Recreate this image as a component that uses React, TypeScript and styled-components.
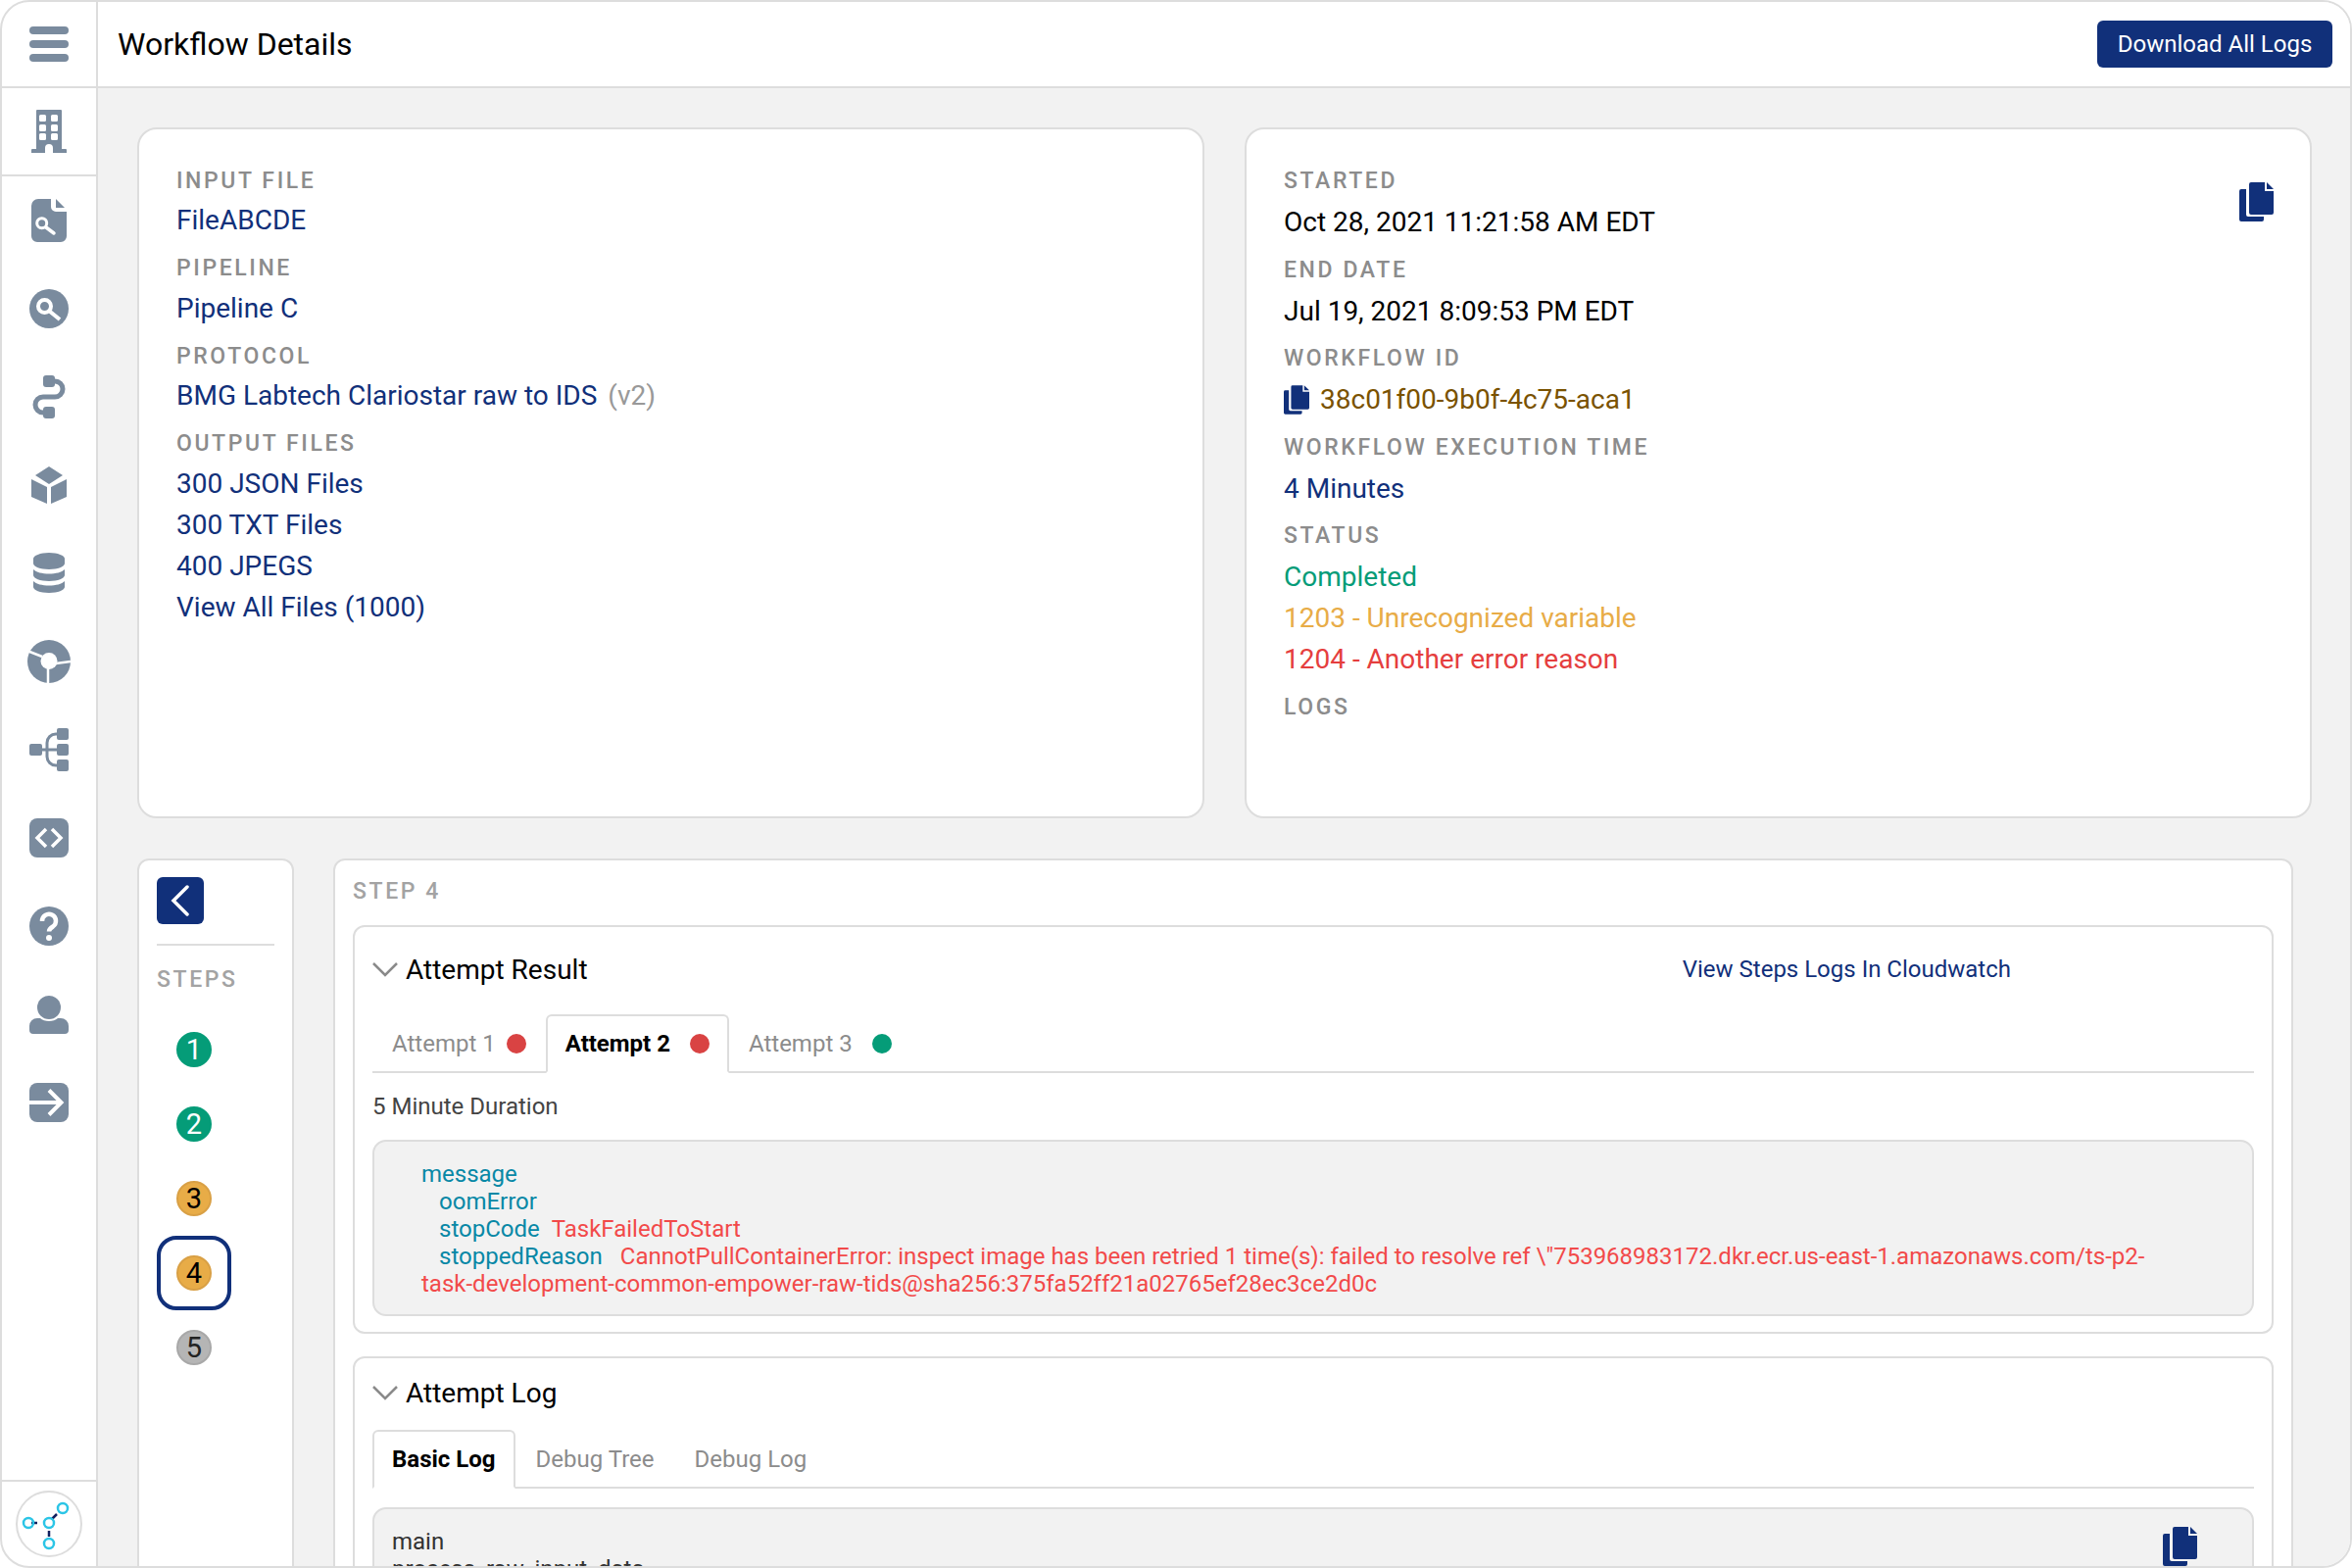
import React from 'react';
import styled, { createGlobalStyle } from 'styled-components';

const NAVY = '#11307a';
const LINE = '#dddddd';
const ICON = '#7a8b9e';
const GREEN = '#059c78';
const AMBER = '#e8ac47';
const RED = '#e53e3e';

const GlobalStyle = createGlobalStyle`
  html, body {
    margin: 0;
    padding: 0;
    background: #fff;
    font-family: Roboto, "Liberation Sans", sans-serif;
  }
`;

const Frame = styled.div`
  box-sizing: border-box;
  width: 2400px;
  height: 1600px;
  border: 2px solid ${LINE};
  border-radius: 30px;
  overflow: hidden;
  display: flex;
  background: #fff;
`;

const Sidebar = styled.nav`
  box-sizing: border-box;
  flex: 0 0 98px;
  display: flex;
  flex-direction: column;
  border-right: 2px solid ${LINE};
`;

const NavCell = styled.div<{ $h?: number; $rule?: boolean }>`
  box-sizing: border-box;
  height: ${p => p.$h ?? 90}px;
  display: flex;
  align-items: center;
  justify-content: center;
  border-bottom: ${p => (p.$rule ? `2px solid ${LINE}` : 'none')};
`;

const LogoCell = styled.div`
  box-sizing: border-box;
  margin-top: auto;
  height: 88px;
  border-top: 2px solid ${LINE};
  display: flex;
  align-items: center;
  justify-content: center;
`;

const LogoRing = styled.div`
  box-sizing: border-box;
  width: 68px;
  height: 68px;
  border: 2px solid ${LINE};
  border-radius: 50%;
  display: flex;
  align-items: center;
  justify-content: center;
`;

const Main = styled.main`
  flex: 1;
  min-width: 0;
  display: flex;
  flex-direction: column;
  background: #f2f2f2;
`;

const Header = styled.header`
  box-sizing: border-box;
  flex: 0 0 88px;
  display: flex;
  align-items: center;
  justify-content: space-between;
  padding: 0 18px 0 20px;
  background: #fff;
  border-bottom: 2px solid ${LINE};
`;

const Title = styled.h1`
  margin: 0;
  font-size: 32px;
  font-weight: 400;
  color: #000;
`;

const DownloadButton = styled.button`
  width: 240px;
  height: 48px;
  border: 0;
  border-radius: 6px;
  background: ${NAVY};
  color: #fff;
  font: 400 24px Roboto, sans-serif;
`;

const Content = styled.div`
  flex: 1;
  min-height: 0;
  padding: 40px 39px 0 40px;
`;

const TopRow = styled.div`
  display: grid;
  grid-template-columns: 1089px 1089px;
  gap: 41px;
  margin-bottom: 41px;
`;

const Card = styled.section<{ $top: number }>`
  box-sizing: border-box;
  height: 705px;
  padding: ${p => p.$top}px 37px 0 38px;
  background: #fff;
  border: 2px solid ${LINE};
  border-radius: 20px;
  display: flex;
  justify-content: space-between;
  align-items: flex-start;
`;

const Field = styled.div<{ $wide?: boolean }>`
  margin-bottom: ${p => (p.$wide ? 13.5 : 14)}px;
`;

const Label = styled.div<{ $wide?: boolean }>`
  height: 28px;
  margin-bottom: ${p => (p.$wide ? 7 : 5.5)}px;
  font-size: 23px;
  line-height: 28px;
  font-weight: 500;
  letter-spacing: 2.6px;
  color: #8c8c8c;
`;

const Value = styled.div<{ $color?: string }>`
  min-height: 42px;
  display: flex;
  align-items: center;
  gap: 11px;
  font-size: 28px;
  line-height: 42px;
  color: ${p => p.$color ?? '#000'};
`;

const Version = styled.span`
  margin-left: 11px;
  color: #999;
`;

const Sheets = styled.svg<{ $w: number; $h: number }>`
  flex: none;
  width: ${p => p.$w}px;
  height: ${p => p.$h}px;
  fill: ${NAVY};
`;

const CornerCopy = styled.div`
  margin: 15px 0 0 0;
`;

const BottomRow = styled.div`
  display: flex;
  gap: 40px;
`;

const StepsPanel = styled.aside`
  box-sizing: border-box;
  flex: 0 0 160px;
  height: 800px;
  padding: 17px 18px 0;
  background: #fff;
  border: 2px solid ${LINE};
  border-radius: 12px 12px 0 0;
`;

const BackButton = styled.button`
  display: flex;
  align-items: center;
  justify-content: center;
  width: 48px;
  height: 48px;
  padding: 0;
  border: 0;
  border-radius: 6px;
  background: ${NAVY};
`;

const Divider = styled.hr`
  width: 120px;
  margin: 20px 0 21px;
  border: 0;
  border-top: 2px solid ${LINE};
`;

const StepsLabel = styled(Label)`
  margin-bottom: 19px;
  color: #a3a3a3;
`;

const StepSlot = styled.div<{ $active?: boolean }>`
  box-sizing: border-box;
  width: 76px;
  height: 76px;
  display: flex;
  align-items: center;
  justify-content: center;
  border: ${p => (p.$active ? `4px solid ${NAVY}` : '0')};
  border-radius: 20px;
`;

const StepCircle = styled.div<{ $bg: string; $edge: string; $fg: string }>`
  box-sizing: border-box;
  width: 36px;
  height: 36px;
  display: flex;
  align-items: center;
  justify-content: center;
  border: 2px solid ${p => p.$edge};
  border-radius: 50%;
  background: ${p => p.$bg};
  color: ${p => p.$fg};
  font-size: 29px;
`;

const DetailPanel = styled.section`
  box-sizing: border-box;
  flex: 0 0 2000px;
  height: 800px;
  padding: 18px 18px 0;
  background: #fff;
  border: 2px solid ${LINE};
  border-radius: 12px 12px 0 0;
`;

const StepTitle = styled(Label)`
  margin-bottom: 20px;
  color: #a3a3a3;
`;

const SubCard = styled.div`
  box-sizing: border-box;
  margin-bottom: 23px;
  padding: 0 18px 16px;
  border: 2px solid ${LINE};
  border-radius: 12px;
`;

const SubHead = styled.div<{ $top: number }>`
  display: flex;
  align-items: center;
  padding-top: ${p => p.$top}px;
  height: 40px;
`;

const Chevron = styled.svg`
  flex: none;
  width: 26px;
  height: 15px;
  margin-right: 8px;
  fill: none;
  stroke: #8a8a8a;
  stroke-width: 2.5;
`;

const SubTitle = styled.span`
  font-size: 28px;
  color: #000;
`;

const CloudwatchLink = styled.a`
  margin: 0 248px 0 auto;
  font-size: 24px;
  color: ${NAVY};
`;

const TabBar = styled.div<{ $top: number; $gap?: number }>`
  display: flex;
  gap: ${p => p.$gap ?? 0}px;
  height: 58px;
  margin-top: ${p => p.$top}px;
  border-bottom: 2px solid ${LINE};
`;

const Tab = styled.div<{ $active?: boolean; $gap?: number }>`
  box-sizing: border-box;
  height: 60px;
  display: flex;
  align-items: center;
  gap: ${p => p.$gap ?? 20}px;
  padding: 0 18px;
  border: 2px solid ${p => (p.$active ? LINE : 'transparent')};
  border-bottom-color: ${p => (p.$active ? '#fff' : 'transparent')};
  border-radius: 6px 6px 0 0;
  background: ${p => (p.$active ? '#fff' : 'transparent')};
  font-size: 24px;
  font-weight: ${p => (p.$active ? 700 : 400)};
  color: ${p => (p.$active ? '#000' : '#8c8c8c')};
`;

const Dot = styled.span<{ $color: string }>`
  flex: none;
  width: 20px;
  height: 20px;
  border-radius: 50%;
  background: ${p => p.$color};
`;

const Duration = styled.div`
  margin-top: 19px;
  font-size: 24px;
  line-height: 30px;
  color: #444;
`;

const CodeBox = styled.div<{ $top: number }>`
  position: relative;
  box-sizing: border-box;
  margin-top: ${p => p.$top}px;
  background: #f2f2f2;
  border: 2px solid ${LINE};
  border-radius: 14px;
  font-size: 24px;
  line-height: 28px;
`;

const ResultCode = styled(CodeBox)`
  padding: 19px 20px 17px 48px;
  white-space: nowrap;
`;

const LogCode = styled(CodeBox)`
  height: 300px;
  padding: 19px 18px;
  color: #333;
`;

const CodeLine = styled.div<{ $indent?: boolean }>`
  padding-left: ${p => (p.$indent ? 18 : 0)}px;
`;

const Key = styled.span<{ $gap?: number }>`
  margin-right: ${p => p.$gap ?? 0}px;
  color: #0888a6;
`;

const Err = styled.span`
  color: #f24a4a;
`;

const LogCopy = styled.div`
  position: absolute;
  top: 18px;
  right: 56px;
`;

const CopyIcon = ({ w, h }: { w: number; h: number }) => (
  <Sheets $w={w} $h={h} viewBox="0 0 35 40">
    <path d="M7 7H2a2 2 0 0 0-2 2v29a2 2 0 0 0 2 2h21a2 2 0 0 0 2-2v-3H9a2 2 0 0 1-2-2z" />
    <path d="M10 2a2 2 0 0 1 2-2h14v9h9v22a2 2 0 0 1-2 2H12a2 2 0 0 1-2-2z" />
    <path d="M28 0l7 7h-7z" />
  </Sheets>
);

const navIcons: { name: string; body: React.ReactNode }[] = [
  {
    name: 'file-search',
    body: (
      <>
        <path d="M4 7a7 7 0 0 1 7-7h13v8a5 5 0 0 0 5 5h11v25a6 6 0 0 1-6 6H10a6 6 0 0 1-6-6z" />
        <path d="M29 0l9 9h-9z" />
        <circle cx="14.700" cy="24.700" r="5" fill="none" stroke="#fff" strokeWidth="3" />
        <path d="M19 29l8 6" stroke="#fff" strokeWidth="3.500" strokeLinecap="round" />
      </>
    ),
  },
  {
    name: 'search',
    body: (
      <>
        <circle cx="22" cy="22" r="20" />
        <circle cx="17.500" cy="19.500" r="6.500" fill="none" stroke="#fff" strokeWidth="4" />
        <path d="M22.500 24.500L33 33" stroke="#fff" strokeWidth="4" />
      </>
    ),
  },
  {
    name: 'route',
    body: (
      <>
        <rect x="16" y="0" width="12" height="12" rx="3" />
        <rect x="16" y="32" width="12" height="12" rx="3" />
        <path d="M26 6h2a8 8 0 0 1 0 16H16a8 8 0 0 0 0 16h2" fill="none" stroke={ICON} strokeWidth="5" />
      </>
    ),
  },
  {
    name: 'cube',
    body: (
      <>
        <path d="M22 3l14 9-14 9-14-9z" />
        <path d="M4 16l16 8v17L4 34z" />
        <path d="M40 16l-16 8v17l16-7z" />
      </>
    ),
  },
  {
    name: 'database',
    body: (
      <>
        <path d="M6 7c0-3 7-6 16-6s16 3 16 6v5c0 3-7 6-16 6S6 15 6 12z" />
        <path d="M6 18c3 3 9 4.500 16 4.500s13-1.500 16-4.500v6c0 3-7 6-16 6s-16-3-16-6z" />
        <path d="M6 30c3 3 9 4.500 16 4.500s13-1.500 16-4.500v6c0 3-7 6-16 6s-16-3-16-6z" />
      </>
    ),
  },
  {
    name: 'chart',
    body: (
      <>
        <circle cx="22" cy="22" r="22" />
        <circle cx="22" cy="21.500" r="8.500" fill="#fff" />
        <path d="M1 11.500l14 5.500M29 24l15-2M21 29v15" fill="none" stroke="#fff" strokeWidth="2.500" />
      </>
    ),
  },
  {
    name: 'tree',
    body: (
      <>
        <rect x="2" y="16" width="13" height="12" rx="2" />
        <rect x="30" y="0" width="12" height="12" rx="2" />
        <rect x="30" y="16" width="12" height="12" rx="2" />
        <rect x="30" y="32" width="12" height="12" rx="2" />
        <path d="M14 22h16M30 6h-1a9 9 0 0 0-9 9v14a9 9 0 0 0 9 9h1" fill="none" stroke={ICON} strokeWidth="3" />
      </>
    ),
  },
  {
    name: 'code',
    body: (
      <>
        <rect x="2" y="2" width="40" height="40" rx="8" />
        <path d="M19 13l-9 9 9 9M25 13l9 9-9 9" fill="none" stroke="#fff" strokeWidth="3.500" />
      </>
    ),
  },
  {
    name: 'help',
    body: (
      <>
        <circle cx="22" cy="22" r="20" />
        <path d="M15 17a7 7 0 1 1 11 5.500c-2.500 1.500-4 2.500-4 5" fill="none" stroke="#fff" strokeWidth="4.500" />
        <circle cx="22" cy="34" r="3" fill="#fff" />
      </>
    ),
  },
  {
    name: 'user',
    body: (
      <>
        <circle cx="22" cy="15" r="12" />
        <path d="M2 34a8 8 0 0 1 8-8h3c2 2 5.500 3 9 3s7-1 9-3h3a8 8 0 0 1 8 8v4a4 4 0 0 1-4 4H6a4 4 0 0 1-4-4z" />
      </>
    ),
  },
  {
    name: 'exit',
    body: (
      <>
        <rect x="2" y="2" width="40" height="40" rx="8" />
        <path d="M2 22h32M22 9.500L34.500 22 22 34.500" fill="none" stroke="#fff" strokeWidth="4" />
      </>
    ),
  },
];

const NavSvg = styled.svg`
  width: 44px;
  height: 44px;
  fill: ${ICON};
`;

const Logo = () => (
  <svg width="64" height="64" viewBox="0 0 64 64" fill="none">
    <path d="M14 31h6M35 27l5-5M32 39v6" stroke="#11205e" strokeWidth="2.500" />
    <g stroke="#2cc5e6" strokeWidth="2.500">
      <circle cx="11" cy="31" r="5" />
      <circle cx="32" cy="31" r="5" />
      <circle cx="46" cy="16" r="5" />
      <circle cx="32" cy="52" r="5" />
    </g>
  </svg>
);

const steps = [
  { n: 1, bg: GREEN, edge: GREEN, fg: '#fff' },
  { n: 2, bg: GREEN, edge: GREEN, fg: '#fff' },
  { n: 3, bg: AMBER, edge: '#d9a045', fg: '#000' },
  { n: 4, bg: AMBER, edge: '#d9a045', fg: '#000', active: true },
  { n: 5, bg: '#b5b5b5', edge: '#a8a8a8', fg: '#222' },
];

const App = () => (
  <>
    <GlobalStyle />
    <Frame>
      <Sidebar>
        <NavCell $h={88} $rule>
          <NavSvg viewBox="0 0 44 44">
            <rect x="2" y="4" width="40" height="8" rx="4" />
            <rect x="2" y="18" width="40" height="8" rx="4" />
            <rect x="2" y="32" width="40" height="8" rx="4" />
          </NavSvg>
        </NavCell>
        <NavCell $rule>
          <NavSvg viewBox="0 0 44 44">
            <path d="M10 0h24a1 1 0 0 1 1 1v39h4a1 1 0 0 1 1 1v3H26v-5a4 4 0 0 0-8 0v5H4v-3a1 1 0 0 1 1-1h4V1a1 1 0 0 1 1-1z" />
            <g fill="#fff">
              <rect x="12" y="5" width="7" height="7" rx="1.500" />
              <rect x="24" y="5" width="7" height="7" rx="1.500" />
              <rect x="12" y="15" width="7" height="7" rx="1.500" />
              <rect x="24" y="15" width="7" height="7" rx="1.500" />
              <rect x="12" y="24" width="7" height="7" rx="1.500" />
              <rect x="24" y="24" width="7" height="7" rx="1.500" />
            </g>
          </NavSvg>
        </NavCell>
        {navIcons.map(icon => (
          <NavCell key={icon.name}>
            <NavSvg viewBox="0 0 44 44">{icon.body}</NavSvg>
          </NavCell>
        ))}
        <LogoCell>
          <LogoRing>
            <Logo />
          </LogoRing>
        </LogoCell>
      </Sidebar>

      <Main>
        <Header>
          <Title>Workflow Details</Title>
          <DownloadButton>Download All Logs</DownloadButton>
        </Header>

        <Content>
          <TopRow>
            <Card $top={38.5}>
              <div>
                <Field>
                  <Label>INPUT FILE</Label>
                  <Value $color={NAVY}>FileABCDE</Value>
                </Field>
                <Field>
                  <Label>PIPELINE</Label>
                  <Value $color={NAVY}>Pipeline C</Value>
                </Field>
                <Field>
                  <Label>PROTOCOL</Label>
                  <Value $color={NAVY}>
                    <span>
                      BMG Labtech Clariostar raw to IDS<Version>(v2)</Version>
                    </span>
                  </Value>
                </Field>
                <Field>
                  <Label>OUTPUT FILES</Label>
                  <Value $color={NAVY}>300 JSON Files</Value>
                  <Value $color={NAVY}>300 TXT Files</Value>
                  <Value $color={NAVY}>400 JPEGS</Value>
                  <Value $color={NAVY}>View All Files (1000)</Value>
                </Field>
              </div>
            </Card>

            <Card $top={39}>
              <div>
                <Field $wide>
                  <Label $wide>STARTED</Label>
                  <Value>Oct 28, 2021 11:21:58 AM EDT</Value>
                </Field>
                <Field $wide>
                  <Label $wide>END DATE</Label>
                  <Value>Jul 19, 2021 8:09:53 PM EDT</Value>
                </Field>
                <Field $wide>
                  <Label $wide>WORKFLOW ID</Label>
                  <Value $color="#7a5200">
                    <CopyIcon w={26} h={30} />
                    38c01f00-9b0f-4c75-aca1
                  </Value>
                </Field>
                <Field $wide>
                  <Label $wide>WORKFLOW EXECUTION TIME</Label>
                  <Value $color={NAVY}>4 Minutes</Value>
                </Field>
                <Field $wide>
                  <Label $wide>STATUS</Label>
                  <Value $color={GREEN}>Completed</Value>
                  <Value $color={AMBER}>1203 - Unrecognized variable</Value>
                  <Value $color={RED}>1204 - Another error reason</Value>
                </Field>
                <Field $wide>
                  <Label $wide>LOGS</Label>
                </Field>
              </div>
              <CornerCopy>
                <CopyIcon w={35} h={40} />
              </CornerCopy>
            </Card>
          </TopRow>

          <BottomRow>
            <StepsPanel>
              <BackButton>
                <svg width="20" height="32" viewBox="0 0 20 32" fill="none" stroke="#fff" strokeWidth="3.500" strokeLinecap="round">
                  <path d="M17 2L3 16l14 14" />
                </svg>
              </BackButton>
              <Divider />
              <StepsLabel>STEPS</StepsLabel>
              {steps.map(step => (
                <StepSlot key={step.n} $active={step.active}>
                  <StepCircle $bg={step.bg} $edge={step.edge} $fg={step.fg}>
                    {step.n}
                  </StepCircle>
                </StepSlot>
              ))}
            </StepsPanel>

            <DetailPanel>
              <StepTitle>STEP 4</StepTitle>

              <SubCard>
                <SubHead $top={23}>
                  <Chevron viewBox="0 0 26 15">
                    <path d="M1 1l12 12L25 1" />
                  </Chevron>
                  <SubTitle>Attempt Result</SubTitle>
                  <CloudwatchLink>View Steps Logs In Cloudwatch</CloudwatchLink>
                </SubHead>
                <TabBar $top={26}>
                  <Tab $gap={11}>
                    Attempt 1 <Dot $color="#d94343" />
                  </Tab>
                  <Tab $active>
                    Attempt 2 <Dot $color="#d94343" />
                  </Tab>
                  <Tab>
                    Attempt 3 <Dot $color={GREEN} />
                  </Tab>
                </TabBar>
                <Duration>5 Minute Duration</Duration>
                <ResultCode $top={19}>
                  <CodeLine>
                    <Key>message</Key>
                  </CodeLine>
                  <CodeLine $indent>
                    <Key>oomError</Key>
                  </CodeLine>
                  <CodeLine $indent>
                    <Key $gap={12}>stopCode</Key>
                    <Err>TaskFailedToStart</Err>
                  </CodeLine>
                  <CodeLine $indent>
                    <Key $gap={18}>stoppedReason</Key>
                    <Err>
                      CannotPullContainerError: inspect image has been retried 1 time(s): failed to resolve ref \"753968983172.dkr.ecr.us-east-1.amazonaws.com/ts-p2-
                    </Err>
                  </CodeLine>
                  <CodeLine>
                    <Err>task-development-common-empower-raw-tids@sha256:375fa52ff21a02765ef28ec3ce2d0c</Err>
                  </CodeLine>
                </ResultCode>
              </SubCard>

              <SubCard>
                <SubHead $top={15}>
                  <Chevron viewBox="0 0 26 15">
                    <path d="M1 1l12 12L25 1" />
                  </Chevron>
                  <SubTitle>Attempt Log</SubTitle>
                </SubHead>
                <TabBar $top={18} $gap={1}>
                  <Tab $active>Basic Log</Tab>
                  <Tab>Debug Tree</Tab>
                  <Tab>Debug Log</Tab>
                </TabBar>
                <LogCode $top={19}>
                  main
                  <br />
                  process_raw_input_data
                  <LogCopy>
                    <CopyIcon w={35} h={40} />
                  </LogCopy>
                </LogCode>
              </SubCard>
            </DetailPanel>
          </BottomRow>
        </Content>
      </Main>
    </Frame>
  </>
);

export default App;
